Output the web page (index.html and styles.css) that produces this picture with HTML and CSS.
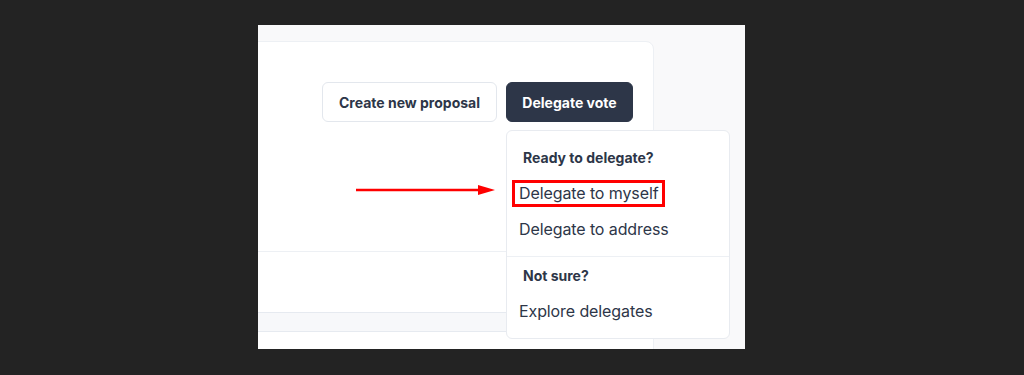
FILE: index.html
```html
<!DOCTYPE html>
<html lang="en">
<head>
  <meta charset="UTF-8" />
  <title>Governance</title>
  <link rel="stylesheet" href="styles.css">
</head>
<body>
  <div class="shot">
    <div class="card">
      <div class="card-head">
        <button class="btn btn-light">Create new proposal</button>
        <div class="delegate">
          <button class="btn btn-dark">Delegate vote</button>
          <div class="menu">
            <div class="menu-group">
              <div class="menu-title">Ready to delegate?</div>
              <div class="menu-item"><span class="mark">Delegate to myself</span></div>
              <div class="menu-item">Delegate to address</div>
            </div>
            <div class="menu-group">
              <div class="menu-title">Not sure?</div>
              <div class="menu-item">Explore delegates</div>
            </div>
          </div>
        </div>
      </div>
      <div class="card-row"></div>
      <div class="card-band"></div>
      <div class="card-rest"></div>
    </div>
    <svg class="arrow" width="140" height="10" viewBox="0 0 140 10">
      <line x1="0" y1="5" x2="124" y2="5" stroke="#ff0000" stroke-width="2.5"/>
      <polygon points="122,0 139,5 122,10" fill="#ff0000"/>
    </svg>
  </div>
</body>
</html>
```

FILE: styles.css
```css
body {
  margin: 0;
  background: #232323;
  font-family: Inter, "Noto Sans", sans-serif;
  color: #2d3648;
  height: 375px;
  overflow: hidden;
}
.shot {
  position: relative;
  margin: 25px 0 0 258px;
  width: 487px;
  height: 324px;
  background: #f9f9fa;
  overflow: hidden;
}
.card {
  margin: 16px 0 0 -20px;
  width: 414px;
  background: #fff;
  border: 1px solid #edf0f4;
  border-radius: 8px;
}
.card-head {
  display: flex;
  justify-content: flex-end;
  align-items: flex-start;
  gap: 9px;
  padding: 40px 20px 0 0;
  height: 169px;
  border-bottom: 1px solid #edf0f4;
}
.btn {
  font-family: inherit;
  font-size: 14px;
  font-weight: 700;
  height: 40px;
  padding: 0 12px;
  border-radius: 6px;
  white-space: nowrap;
  cursor: pointer;
}
.btn-light {
  background: #fff;
  border: 1px solid #e3e7ed;
  color: #2d3648;
  width: 175px;
}
.btn-dark {
  background: #2d3648;
  border: 1px solid #2d3648;
  color: #fff;
  width: 127px;
}
.delegate {
  position: relative;
}
.menu {
  position: absolute;
  top: 48px;
  left: 0;
  width: 222px;
  background: #fff;
  border: 1px solid #e8ebf0;
  border-radius: 6px;
  z-index: 2;
}
.menu-group {
  padding: 18px 0 6px;
}
.menu-group + .menu-group {
  border-top: 1px solid #edf0f4;
  padding-top: 10px;
  padding-bottom: 6px;
}
.menu-title {
  font-size: 14px;
  font-weight: 700;
  line-height: 17px;
  padding-left: 16px;
  margin-bottom: 12px;
}
.menu-item {
  font-size: 16px;
  padding: 0 12px;
  height: 36px;
  line-height: 30px;
  white-space: nowrap;
  letter-spacing: -0.1px;
}
.mark {
  display: inline-block;
  vertical-align: top;
  margin: 2px 0 0 -7px;
  border: 3px solid #ff0000;
  padding: 0 3px 0 4px;
  line-height: 21px;
}
.card-row {
  height: 60px;
  border-bottom: 1px solid #e6eaf0;
}
.card-band {
  height: 18px;
  background: #f7f8fa;
  border-bottom: 1px solid #e6eaf0;
}
.card-rest {
  height: 40px;
}
.arrow {
  position: absolute;
  left: 98px;
  top: 160px;
}
```
